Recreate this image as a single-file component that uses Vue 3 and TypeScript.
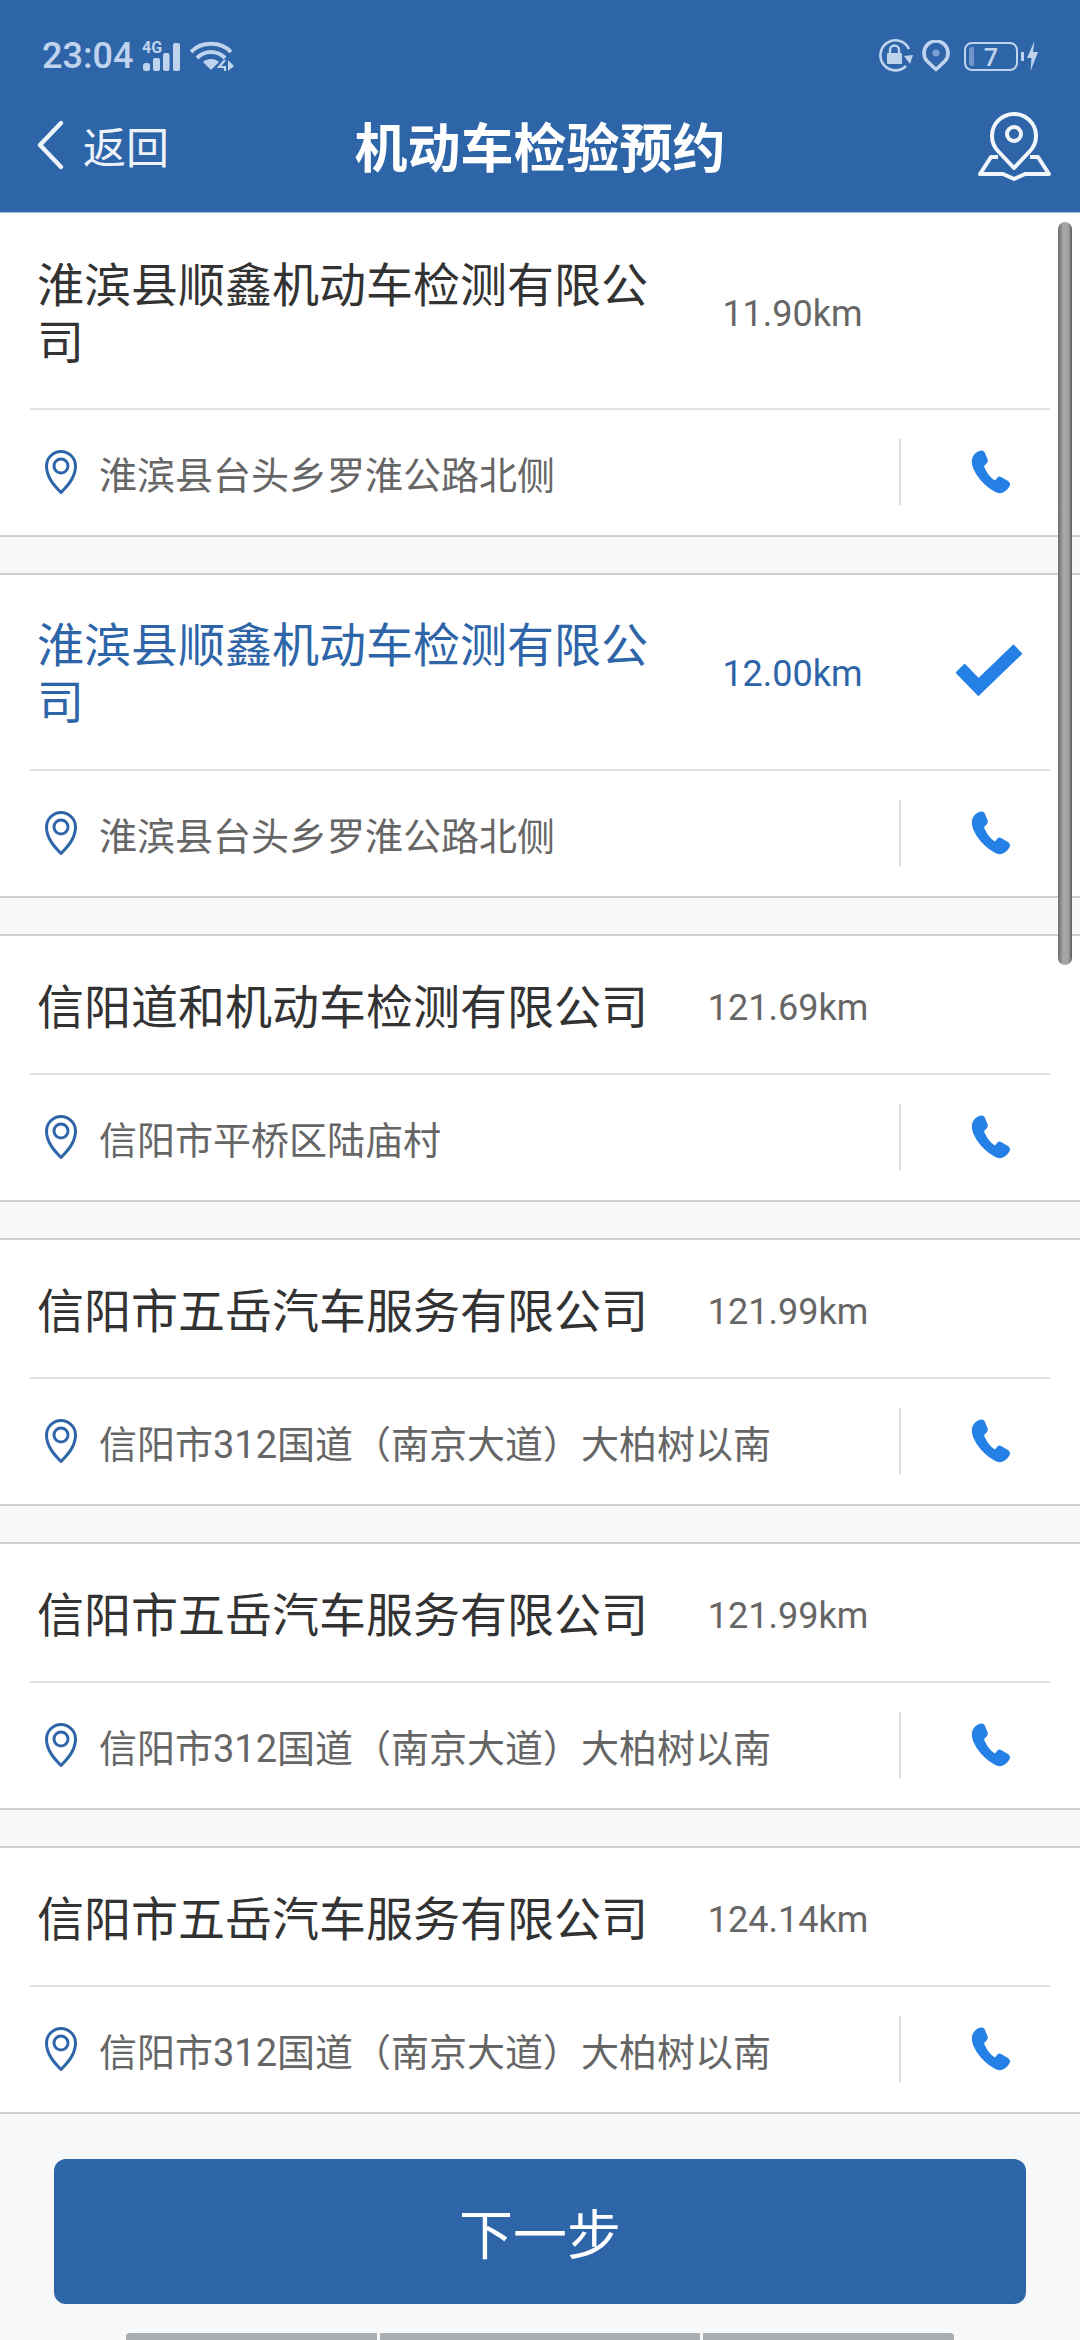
<script setup lang="ts">
import { ref } from 'vue';

interface Station {
    id: number;
    name: string;
    distance: string;
    address: string;
}

const selected = ref(2);

const stations: Station[] = [
    { id: 1, name: '淮滨县顺鑫机动车检测有限公司', distance: '11.90km', address: '淮滨县台头乡罗淮公路北侧' },
    { id: 2, name: '淮滨县顺鑫机动车检测有限公司', distance: '12.00km', address: '淮滨县台头乡罗淮公路北侧' },
    { id: 3, name: '信阳道和机动车检测有限公司', distance: '121.69km', address: '信阳市平桥区陆庙村' },
    { id: 4, name: '信阳市五岳汽车服务有限公司', distance: '121.99km', address: '信阳市312国道（南京大道）大柏树以南' },
    { id: 5, name: '信阳市五岳汽车服务有限公司', distance: '121.99km', address: '信阳市312国道（南京大道）大柏树以南' },
    { id: 6, name: '信阳市五岳汽车服务有限公司', distance: '124.14km', address: '信阳市312国道（南京大道）大柏树以南' },
];
</script>

<template>
    <div class="page">
        <header class="header">
            <div class="status">
                <span class="time">23:04</span>
                <span class="signal">
                    <span class="net">4G</span>
                    <svg width="37" height="28" viewBox="0 0 37 28">
                        <rect x="0" y="20" width="7" height="8" rx="2.5" fill="#c0d3ee" />
                        <rect x="10" y="15" width="7" height="13" rx="2" fill="#c0d3ee" />
                        <rect x="20" y="10" width="6.5" height="18" rx="2" fill="#c0d3ee" />
                        <rect x="30" y="0" width="7" height="28" rx="2" fill="#c0d3ee" />
                    </svg>
                </span>
                <svg class="wifi" width="44" height="30" viewBox="0 0 44 30" fill="none" stroke="#c0d3ee" stroke-width="4">
                    <path d="M1 11 C11 0 31 0 41 11" />
                    <path d="M7 17 C15 9 27 9 35 17" />
                    <path d="M21 29 L13 21 C17 17 25 17 29 21 Z" fill="#c0d3ee" stroke="none" />
                    <path d="M35 19 L29 26 H35 V30" stroke-width="2.2" />
                    <path d="M38 19 V30 L44 25 Z" fill="#c0d3ee" stroke="none" />
                </svg>
                <span class="spacer"></span>
                <svg class="lock" width="34" height="34" viewBox="0 0 34 34" fill="none">
                    <path d="M27 27 A15 15 0 1 1 30 10" stroke="#c0d3ee" stroke-width="2.6" />
                    <path d="M25 17 L34 16 L31 25 Z" fill="#c0d3ee" />
                    <rect x="8" y="14" width="15" height="11" rx="1" fill="#c0d3ee" />
                    <path d="M11 14 V11 A4.500 4.500 0 0 1 20 11 V14" stroke="#c0d3ee" stroke-width="2.4" />
                </svg>
                <svg class="loc" width="28" height="32" viewBox="0 0 28 32" fill="none">
                    <path d="M14 29.500 L5 21 A12 12 0 1 1 23 21 Z" stroke="#c0d3ee" stroke-width="3.600" stroke-linejoin="round" />
                    <circle cx="14" cy="13" r="3.600" fill="#7ea0d0" />
                </svg>
                <span class="battery">
                    <span class="level"></span>
                    <span class="pct">7</span>
                </span>
                <span class="tip"></span>
                <svg class="bolt" width="11" height="30" viewBox="0 0 11 30">
                    <path d="M7.500 0 L0 17 H4.500 L3.500 30 L11 11 H6 Z" fill="#c0d3ee" />
                </svg>
            </div>
            <div class="nav">
                <div class="back">
                    <svg width="28" height="50" viewBox="0 0 28 50" fill="none">
                        <path d="M25 3 L4 25 L25 47" stroke="#eef3fa" stroke-width="4.400" stroke-linecap="round" stroke-linejoin="round" />
                    </svg>
                    <span>返回</span>
                </div>
                <h1 class="title">机动车检验预约</h1>
                <svg class="map" width="76" height="72" viewBox="0 0 76 72" fill="none" stroke="#f2f6fb" stroke-width="4">
                    <path d="M37 59 L21 42 A22 22 0 1 1 53 42 Z" stroke-linejoin="round" />
                    <circle cx="37" cy="25" r="7" />
                    <path d="M21 48 H14 L3 65 H26 L37 70 L48 65 H72 L61 48 H53" stroke-linejoin="round" />
                </svg>
            </div>
        </header>

        <main class="list">
            <section
                v-for="item in stations"
                :key="item.id"
                class="card"
                :class="{ active: selected === item.id }"
            >
                <div class="info">
                    <div class="name">{{ item.name }}</div>
                    <div class="distance">{{ item.distance }}</div>
                    <div class="check">
                        <svg v-if="selected === item.id" width="66" height="53" viewBox="0 0 66 53" fill="none">
                            <path d="M4 24 L22.500 43 L62 5" stroke="#2580e6" stroke-width="13" />
                        </svg>
                    </div>
                </div>
                <div class="addr">
                    <svg class="pin" width="32" height="44" viewBox="0 0 32 44" fill="none" stroke="#2d65a8" stroke-width="3">
                        <path d="M16 42.500 C12 38 1.500 29 1.500 16 A14.500 14.500 0 0 1 30.500 16 C30.500 29 20 38 16 42.500 Z" stroke-linejoin="round" />
                        <circle cx="16" cy="16" r="7" />
                    </svg>
                    <span class="addr-text">{{ item.address }}</span>
                    <button class="call" type="button">
                        <svg width="40" height="44" viewBox="0 0 40 44">
                            <path d="M8 1 C3 3 0 8 1 14 C3 24 14 38 27 43 C32 44 37 40 39 35 C39.500 33 38 32 37 31 L30 27 C28.500 26 27 26.500 26 28 L24 30.500 C19 28 14 20 13 16 L15.500 13.500 C17 12 17 11 16.500 9 L13.500 2 C12.500 0.500 10 0 8 1 Z" fill="#2580e6" />
                        </svg>
                    </button>
                </div>
            </section>
            <div class="scrollbar"></div>
        </main>

        <footer class="footer">
            <button class="next" type="button">下一步</button>
            <div class="softkeys">
                <span class="key k1"></span>
                <span class="key k2"></span>
                <span class="key k3"></span>
            </div>
        </footer>
    </div>
</template>

<style scoped>
.page {
    width: 1080px;
    height: 2340px;
    display: flex;
    flex-direction: column;
    overflow: hidden;
    background: #f6f8f9;
    font-family: Roboto, "Noto Sans CJK SC", sans-serif;
}

.header {
    height: 213px;
    flex: none;
    box-sizing: border-box;
    background: #2d65a8;
    border-bottom: 1px solid #9dbbdc;
}

.status {
    height: 48px;
    margin-top: 32px;
    padding: 0 42px;
    display: flex;
    align-items: center;
    color: #c0d3ee;
}

.time {
    font-size: 36px;
    font-weight: 500;
    line-height: 48px;
    width: 101px;
}

.signal {
    position: relative;
    display: flex;
    width: 37px;
    height: 28px;
    margin-top: 2px;
}

.net {
    position: absolute;
    left: -1px;
    top: -3px;
    font-size: 16px;
    line-height: 16px;
    font-weight: 700;
}

.wifi {
    margin-left: 10px;
}

.spacer {
    flex: 1;
}

.loc {
    margin-left: 9px;
}

.battery {
    position: relative;
    width: 54px;
    height: 29px;
    margin-left: 14px;
    box-sizing: border-box;
    border: 2.500px solid #c0d3ee;
    border-radius: 8px;
    display: flex;
    align-items: center;
    justify-content: center;
}

.level {
    position: absolute;
    left: 3px;
    top: 3px;
    bottom: 3px;
    width: 5px;
    border-radius: 3px 0 0 3px;
    background: #6f96c8;
}

.pct {
    font-size: 25px;
    line-height: 24px;
    font-family: "Open Sans", sans-serif;
    font-weight: 600;
}

.tip {
    width: 3px;
    height: 9px;
    margin-left: 3px;
    background: #c0d3ee;
}

.bolt {
    margin-left: 3px;
}

.nav {
    height: 129px;
    padding: 0 27px 0 36px;
    display: flex;
    align-items: center;
    justify-content: space-between;
    position: relative;
}

.back {
    display: flex;
    align-items: center;
    gap: 19px;
    color: #eef3fa;
    font-size: 43px;
}

.title {
    position: absolute;
    left: 0;
    right: 0;
    top: 0;
    bottom: 0;
    margin: 0;
    display: flex;
    align-items: center;
    justify-content: center;
    color: #fff;
    font-size: 53px;
    font-weight: 700;
}

.map {
    position: relative;
}

.list {
    flex: 1;
    min-height: 0;
    position: relative;
    display: flex;
    flex-direction: column;
    gap: 36px;
}

.card {
    flex: none;
    background: #fff;
    border-top: 2px solid #cdd0d1;
    border-bottom: 2px solid #cdd0d1;
}

.card:first-child {
    border-top: none;
}

.info {
    margin: 0 30px;
    padding: 43px 0 37px;
    display: flex;
    align-items: center;
    border-bottom: 2px solid #e2e2e2;
}

.card:first-child .info {
    padding: 44px 0 37px;
}

.card.active .info {
    padding: 42px 0 38px;
}

.name {
    flex: 0 1 auto;
    max-width: 620px;
    margin-left: 7px;
    color: #333;
    font-size: 47px;
    line-height: 57px;
}

.distance {
    flex: 1;
    text-align: center;
    color: #666;
    font-size: 36px;
}

.check {
    width: 122px;
    flex: none;
    display: flex;
    justify-content: center;
    margin-top: -7px;
}

.active .name,
.active .distance {
    color: #2d65a8;
}

.addr {
    height: 125px;
    box-sizing: border-box;
    padding: 0 0 2px 45px;
    display: flex;
    align-items: center;
}

.pin {
    flex: none;
}

.addr-text {
    flex: 1;
    margin: 2px 0 0 22px;
    color: #666;
    font-size: 38px;
}

.call {
    width: 181px;
    height: 66px;
    flex: none;
    padding: 0;
    background: none;
    border: none;
    border-left: 2px solid #dedede;
    display: flex;
    align-items: center;
    justify-content: center;
}

.scrollbar {
    position: absolute;
    left: 1058px;
    top: 9px;
    width: 14px;
    height: 743px;
    box-sizing: border-box;
    border-radius: 7px;
    background: linear-gradient(90deg, #6d6d6d, #a8a8a8 40%, #a0a0a0 75%, #5a5a5a);
}

.footer {
    height: 226px;
    flex: none;
    position: relative;
    box-sizing: border-box;
    padding: 45px 54px 0;
}

.next {
    display: block;
    width: 100%;
    height: 145px;
    padding: 0;
    border: none;
    border-radius: 12px;
    background: #2d65a8;
    color: #fff;
    font-family: inherit;
    font-size: 54px;
}

.softkeys {
    position: absolute;
    left: 126px;
    bottom: 0;
    display: flex;
    gap: 3px;
}

.key {
    height: 7px;
    background: #abaeb1;
}

.k1 {
    width: 251px;
    border-radius: 4px 0 0 0;
}

.k2 {
    width: 320px;
}

.k3 {
    width: 251px;
    border-radius: 0 4px 0 0;
}
</style>

<style>
html,
body {
    margin: 0;
    background: #f6f8f9;
}
</style>
